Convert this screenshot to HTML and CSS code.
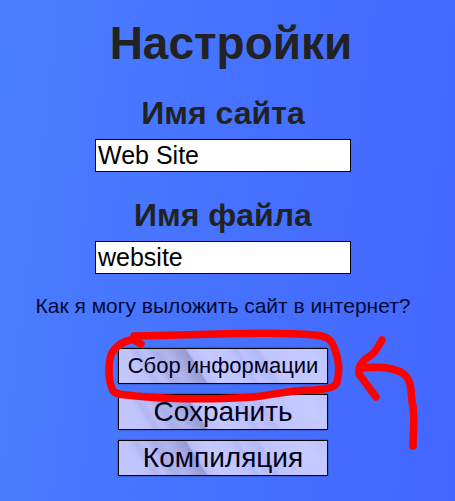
FILE: index.html
```html
<!DOCTYPE html>
<html lang="ru">
<head>
<meta charset="utf-8">
<title>Настройки</title>
<link rel="stylesheet" href="styles.css">
</head>
<body>
<main class="settings">
  <h1 class="title">Настройки</h1>
  <label class="field"><span class="label">Имя сайта</span><input class="input" type="text" value="Web Site"></label>
  <label class="field"><span class="label">Имя файла</span><input class="input" type="text" value="website"></label>
  <a class="help">Как я могу выложить сайт в интернет?</a>
  <div class="actions">
    <button class="button collect">Сбор информации</button>
    <button class="button">Сохранить</button>
    <button class="button">Компиляция</button>
  </div>
</main>
<svg class="marks" viewBox="0 0 455 501" aria-hidden="true">
  <path d="M141 344L133 339.500C123 341 114 347 111 355C108 365 108 380 113 391C118 396 125 394 136 396C163 399 216 400 253 397C275 395 286 390 315 390C328 389 336 387 337 382C340 371 339 360 335 350C332 339 326 336 315 335C267 331 208 335 134 336"/>
  <path d="M382 340C378 346 377 351 370 356C361 361 358 367 359 374L376 397M361 368C382 366 402 368 408 379C413 388 410 396 413 406C415 419 413 431 413 446"/>
</svg>
</body>
</html>
```

FILE: styles.css
```css
* { box-sizing: border-box; }
body {
  margin: 0;
  height: 501px;
  overflow: hidden;
  font-family: "Liberation Sans", Arial, sans-serif;
  background: linear-gradient(97deg, #4a7eff 0%, #4672ff 50%, #4366ff 100%);
}
.settings {
  width: 446px;
  padding-top: 13px;
  display: flex;
  flex-direction: column;
  align-items: center;
}
.title {
  margin: 0 0 0 16px;
  font-size: 46px;
  line-height: 60px;
  color: #222;
}
.field {
  display: flex;
  flex-direction: column;
  align-items: center;
  margin-top: 22px;
}
.field + .field { margin-top: 25px; }
.label {
  font-size: 32px;
  font-weight: bold;
  line-height: 36px;
  margin-bottom: 8px;
  color: #222;
}
.input {
  width: 256px;
  height: 33px;
  padding: 0 2px;
  border: 1px solid #000;
  border-radius: 0;
  background: #fff;
  color: #000;
  font: 25px "Liberation Sans", Arial, sans-serif;
}
.help {
  margin-top: 20px;
  font-size: 21px;
  line-height: 24px;
  white-space: nowrap;
  color: #020a32;
}
.actions {
  display: grid;
  gap: 10px;
  margin-top: 30px;
}
.button {
  width: 210px;
  height: 36px;
  padding: 0;
  border: 1px solid #000;
  font: 28px/34px "Liberation Sans", Arial, sans-serif;
  color: #000018;
  white-space: nowrap;
  box-shadow: 0 0 2px #0006;
  background: linear-gradient(58deg, #c3c8ff 0%, #bec3fb 13%, #b2b7f2 16%, #bbc0fa 20%, #a9aee6 24%, #b0b5ed 29%, #959bd2 38%, #b9befa 39%, #c4c9ff 46%, #bec3ff 57%, #b3b8f7 60%, #bec3ff 62%, #b3b8f8 69%, #bfc4ff 71%, #c5caff 90%, #bdc2ff 100%);
}
.collect { font-size: 22px; }
.marks {
  position: absolute;
  inset: 0;
  width: 455px;
  height: 501px;
  fill: none;
  stroke: #f00;
  stroke-width: 7.5px;
  stroke-linecap: round;
  stroke-linejoin: round;
  pointer-events: none;
}
```
